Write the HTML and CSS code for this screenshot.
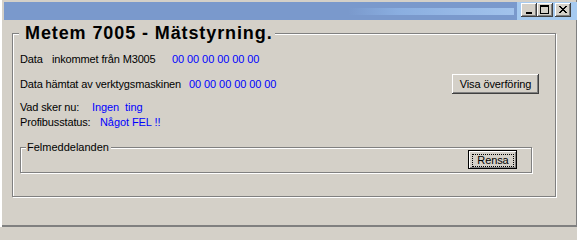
FILE: index.html
```html
<!DOCTYPE html>
<html lang="sv">
<head>
<meta charset="utf-8">
<title>Metem 7005 - Mätstyrning.</title>
<link rel="stylesheet" href="styles.css">
</head>
<body>
<div class="window">
  <div class="titlebar">
    <div class="caption"><div class="caption-band"></div></div>
    <div class="caption-buttons">
      <span class="cap-btn">
        <svg width="16" height="14" viewBox="0 0 16 14" shape-rendering="crispEdges"><rect x="5" y="9" width="6" height="2" fill="#000"/></svg>
      </span>
      <span class="cap-btn">
        <svg width="16" height="14" viewBox="0 0 16 14" shape-rendering="crispEdges" fill="#000">
          <rect x="3" y="2" width="9" height="2"/><rect x="3" y="4" width="1" height="6"/><rect x="11" y="4" width="1" height="6"/><rect x="3" y="10" width="9" height="1"/>
        </svg>
      </span>
      <span class="cap-btn cap-close">
        <svg width="16" height="14" viewBox="0 0 16 14" shape-rendering="crispEdges" fill="#000">
          <g transform="translate(4 3)">
            <rect x="0" y="0" width="2" height="1"/><rect x="6" y="0" width="2" height="1"/>
            <rect x="1" y="1" width="2" height="1"/><rect x="5" y="1" width="2" height="1"/>
            <rect x="2" y="2" width="4" height="1"/>
            <rect x="3" y="3" width="2" height="1"/>
            <rect x="2" y="4" width="4" height="1"/>
            <rect x="1" y="5" width="2" height="1"/><rect x="5" y="5" width="2" height="1"/>
            <rect x="0" y="6" width="2" height="1"/><rect x="6" y="6" width="2" height="1"/>
          </g>
        </svg>
      </span>
    </div>
  </div>

  <div class="group">
    <span class="group-title">Metem 7005 - Mätstyrning.</span>

    <div class="row row-1">
      <span class="lbl lbl-data">Data</span>
      <span class="lbl lbl-in">inkommet från M3005</span>
      <span class="val">00 00 00 00 00 00</span>
    </div>

    <div class="row row-2">
      <span class="lbl lbl-hamtat">Data hämtat av verktygsmaskinen</span>
      <span class="val">00 00 00 00 00 00</span>
      <button class="btn btn-visa">Visa överföring</button>
    </div>

    <div class="row row-3">
      <span class="lbl lbl-vad">Vad sker nu:</span>
      <span class="val">Ingen&nbsp; ting</span>
    </div>

    <div class="row row-4">
      <span class="lbl lbl-profi">Profibusstatus:</span>
      <span class="val">Något FEL !!</span>
    </div>

    <div class="subgroup">
      <span class="subgroup-title">Felmeddelanden</span>
      <button class="btn btn-default"><span class="focus">Rensa</span></button>
    </div>
  </div>
</div>
</body>
</html>
```

FILE: styles.css
```css
html, body {
  margin: 0;
  padding: 0;
  background: #d4d0c8;
  overflow: hidden;
}

.window {
  width: 577px;
  height: 227px;
  box-sizing: border-box;
  padding-top: 2px;
  background: #d4d0c8;
  font-family: "Liberation Sans", Arial, sans-serif;
  font-size: 11px;
  color: #000;
  box-shadow: inset 2px 0 0 #ffffff, inset -1px 0 0 #808080, inset 0 -2px 0 #808080;
}

/* ---------- caption ---------- */
.titlebar {
  display: flex;
  height: 18px;
  margin-left: 4px;
  background: #7a99cc;
}

.caption {
  flex: 1;
  display: flex;
  justify-content: flex-end;
}

.caption-band {
  margin-top: 6px;
  margin-right: 3px;
  width: 166px;
  height: 7px;
  background: linear-gradient(to right, #7a99cc 0%, #8aaee0 30%, #a2c3ec 100%);
}

.caption-buttons {
  width: 60px;
  box-sizing: border-box;
  display: flex;
  align-items: flex-start;
  padding: 1px 0 0 4px;
  background: #a6caf0;
}

.cap-btn {
  display: block;
  width: 16px;
  height: 14px;
  background: #d4d0c8;
  box-shadow: inset -1px -1px 0 #404040, inset 1px 1px 0 #ffffff, inset -2px -2px 0 #808080, inset 2px 2px 0 #d4d0c8;
}

.cap-btn svg {
  display: block;
}

.cap-close {
  margin-left: 2px;
}

/* ---------- main group ---------- */
.group {
  position: relative;
  width: 544px;
  height: 164px;
  box-sizing: border-box;
  margin: 13px 0 0 12px;
  padding: 19px 16px 0 7px;
  border: 1px solid #808080;
  box-shadow: inset 1px 1px 0 #ffffff, 1px 1px 0 #ffffff;
}

.group-title {
  position: absolute;
  top: -11px;
  left: 6px;
  padding: 0 2px 0 6px;
  background: #d4d0c8;
  font-size: 18px;
  font-weight: bold;
  line-height: 20px;
  letter-spacing: 0.9px;
  white-space: nowrap;
}

.row {
  display: flex;
  align-items: center;
  line-height: 13px;
  white-space: nowrap;
}

.row-1 { height: 13px; }
.row-2 { height: 20px; margin-top: 8px; }
.row-3 { height: 13px; margin-top: 7px; }
.row-4 { height: 13px; margin-top: 2px; }

.lbl {
  display: block;
  letter-spacing: -0.15px;
}
.lbl-data { width: 32px; }
.lbl-in { width: 120px; }
.lbl-hamtat { width: 169px; }
.lbl-vad { width: 72px; }
.lbl-profi { width: 80px; }

.val {
  color: #0000ff;
  letter-spacing: -0.08px;
}

/* ---------- buttons ---------- */
.btn {
  font-family: "Liberation Sans", Arial, sans-serif;
  font-size: 11px;
  line-height: 13px;
  letter-spacing: -0.1px;
  color: #000;
  background: #d4d0c8;
  margin: 0;
  padding: 0;
  box-sizing: border-box;
}

.btn-visa {
  margin-left: auto;
  width: 87px;
  height: 20px;
  border: none;
  box-shadow: inset -1px -1px 0 #404040, inset 1px 1px 0 #ffffff, inset -2px -2px 0 #808080, inset 2px 2px 0 #d4d0c8;
}

.btn-default {
  display: flex;
  align-items: flex-start;
  width: 49px;
  height: 19px;
  border: 1px solid #000;
  box-shadow: inset 1px 1px 0 #ffffff, inset -1px -1px 0 #808080;
}

.focus {
  display: block;
  box-sizing: border-box;
  width: 42px;
  height: 13px;
  margin: 3px 0 0 3px;
  border: 1px dotted #000;
  line-height: 11px;
  text-align: center;
}

/* ---------- error group ---------- */
.subgroup {
  position: relative;
  height: 26px;
  box-sizing: border-box;
  margin: 18px 7px 0 0;
  padding: 2px 14px 0 0;
  display: flex;
  justify-content: flex-end;
  align-items: flex-start;
  border: 1px solid #808080;
  box-shadow: inset 1px 1px 0 #ffffff, 1px 1px 0 #ffffff;
}

.subgroup-title {
  position: absolute;
  top: -7px;
  left: 5px;
  padding: 0 2px 0 1px;
  line-height: 13px;
  background: #d4d0c8;
  white-space: nowrap;
}
```
